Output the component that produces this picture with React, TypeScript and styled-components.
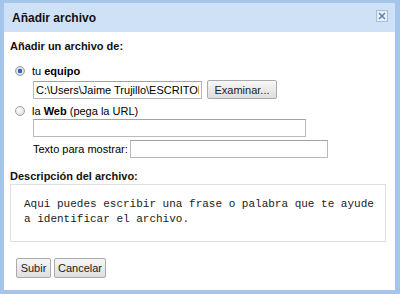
import React from "react";
import styled, { createGlobalStyle } from "styled-components";

const GlobalStyle = createGlobalStyle`
  body {
    margin: 0;
    background: #ffffff;
    font-family: "Liberation Sans", Arial, sans-serif;
    font-size: 11px;
    color: #000000;
  }
`;

export default function App(): JSX.Element {
  return (
    <>
      <GlobalStyle />
      <Frame>
        <TitleBar>
          <Title>Añadir archivo</Title>
          <CloseButton aria-label="Cerrar">
            <svg width="10" height="10" viewBox="0 0 10 10">
              <path d="M2 2 L8 8 M8 2 L2 8" stroke="#5b82bf" strokeWidth="1.5" />
            </svg>
          </CloseButton>
        </TitleBar>
        <Body>
          <SectionLabel>Añadir un archivo de:</SectionLabel>
          <Option $top={11}>
            <Radio type="radio" name="src" defaultChecked />
            <span>tu <b>equipo</b></span>
          </Option>
          <Indented $top={2}>
            <TextInput $width={169} defaultValue="C:\Users\Jaime Trujillo\ESCRITORIO\archivo.doc" />
            <Button $width={70}>Examinar...</Button>
          </Indented>
          <Option $top={5}>
            <Radio type="radio" name="src" />
            <span>la <b>Web</b> (pega la URL)</span>
          </Option>
          <Indented $top={1}>
            <TextInput $width={273} />
          </Indented>
          <Indented $top={3} $gap={2}>
            <span>Texto para mostrar:</span>
            <TextInput $width={198} />
          </Indented>
          <SectionLabel $top={11}>Descripción del archivo:</SectionLabel>
          <Description>
            Aqui puedes escribir una frase o palabra que te ayude
            <br />
            a identificar el archivo.
          </Description>
          <Actions>
            <Button $width={35}>Subir</Button>
            <Button $width={52}>Cancelar</Button>
          </Actions>
        </Body>
      </Frame>
    </>
  );
}

const Frame = styled.div`
  width: 400px;
  height: 294px;
  box-sizing: border-box;
  padding: 3px 5px 4px 4px;
  background: #a6c5ea;
  display: flex;
  flex-direction: column;
`;

const TitleBar = styled.div`
  height: 29px;
  flex-shrink: 0;
  background: #cfe1f6;
  display: flex;
  align-items: center;
  justify-content: space-between;
  padding: 0 7px 0 8px;
`;

const Title = styled.div`
  font-weight: bold;
  font-size: 12px;
  color: #111;
`;

const CloseButton = styled.div`
  width: 10px;
  height: 10px;
  border: 1px solid #a9bcd6;
  background: #e8f0fa;
  display: flex;
  align-items: center;
  justify-content: center;
  margin-top: -3px;
`;

const Body = styled.div`
  flex: 1;
  background: #ffffff;
  padding: 7px 0 0 6px;
  display: flex;
  flex-direction: column;
`;

const SectionLabel = styled.div<{ $top?: number }>`
  font-weight: bold;
  line-height: 14px;
  color: #111;
  margin-top: ${(p) => p.$top ?? 0}px;
`;

const Option = styled.label<{ $top: number }>`
  display: flex;
  align-items: center;
  gap: 7px;
  height: 14px;
  margin: ${(p) => p.$top}px 0 0 5px;
`;

const Radio = styled.input`
  appearance: none;
  width: 10px;
  height: 10px;
  margin: 0;
  box-sizing: border-box;
  border-radius: 50%;
  border: 1px solid #a0a0a0;
  background: radial-gradient(circle at 40% 40%, #ffffff, #d6d6d6);
  &:checked {
    background: radial-gradient(circle, #2c62c0 0 2px, #dfe6ee 2.5px, #c8c8c8 100%);
  }
`;

const Indented = styled.div<{ $top: number; $gap?: number }>`
  display: flex;
  align-items: center;
  gap: ${(p) => p.$gap ?? 5}px;
  margin: ${(p) => p.$top}px 0 0 23px;
`;

const TextInput = styled.input<{ $width: number }>`
  width: ${(p) => p.$width}px;
  height: 18px;
  box-sizing: border-box;
  border: 1px solid #b9b9b9;
  border-top-color: #a3a3a3;
  padding: 0 2px;
  font-family: "Liberation Sans", Arial, sans-serif;
  font-size: 11px;
  color: #000;
  outline: none;
`;

const Button = styled.button<{ $width: number }>`
  width: ${(p) => p.$width}px;
  height: 19px;
  padding: 0;
  border: 1px solid #ababab;
  border-radius: 2px;
  background: linear-gradient(#f7f7f7, #dedede);
  font-family: "Liberation Sans", Arial, sans-serif;
  font-size: 11px;
  color: #222;
`;

const Description = styled.div`
  width: 376px;
  height: 58px;
  box-sizing: border-box;
  margin-top: 1px;
  border: 1px solid #e0e0e0;
  padding: 12px 10px 0 13px;
  font-family: "Liberation Mono", "Courier New", monospace;
  font-size: 11px;
  line-height: 15px;
  white-space: nowrap;
  color: #1a1a1a;
`;

const Actions = styled.div`
  display: flex;
  gap: 3px;
  margin: 16px 0 0 6px;
  & > button {
    height: 20px;
  }
`;
